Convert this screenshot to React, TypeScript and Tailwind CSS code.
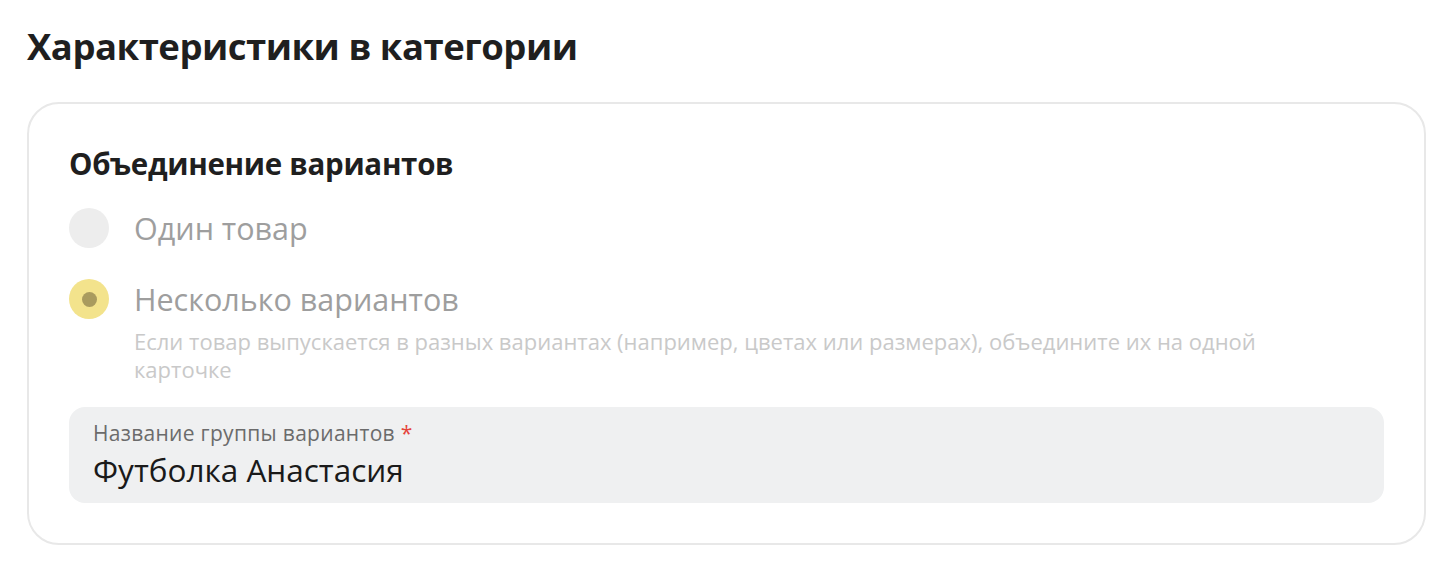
export default function App() {
  return (
    <div className="min-h-[562px] bg-white pl-[27px] pt-[21px] font-['Open_Sans',sans-serif] text-[#1f1f1f]">
      <h1 className="text-[36.5px] font-bold leading-[50px] tracking-[-0.5px]">Характеристики в категории</h1>
      <div className="mt-[31px] w-[1399px] rounded-[32px] border-2 border-[#e8e8e8] px-[40px] pb-[40px] pt-[41px]">
        <h2 className="text-[29.5px] font-bold leading-[38px] tracking-[-0.3px]">Объединение вариантов</h2>
        <div className="mt-[25px] flex items-center gap-[25px]">
          <span className="h-[40px] w-[40px] rounded-full bg-[#ededed]" />
          <span className="text-[30.5px] leading-[40px] text-[#9e9e9e]">Один товар</span>
        </div>
        <div className="mt-[31px] flex items-center gap-[25px]">
          <span className="flex h-[40px] w-[40px] items-center justify-center rounded-full bg-[#f3e38c]">
            <span className="h-[15px] w-[15px] rounded-full bg-[#a99b5e]" />
          </span>
          <span className="text-[30.5px] leading-[40px] text-[#9e9e9e]">Несколько вариантов</span>
        </div>
        <p className="ml-[65px] mt-[8px] max-w-[1180px] text-[22px] leading-[28px] text-[#c9c9c9]">
          Если товар выпускается в разных вариантах (например, цветах или размерах), объедините их на одной карточке
        </p>
        <div className="mt-[24px] rounded-[16px] bg-[#eff0f1] px-[24px] pb-[12px] pt-[12px]">
          <div className="text-[21px] leading-[28px] tracking-[0.3px] text-[#6b6b6b]">
            Название группы вариантов <span className="text-[#e5433b]">*</span>
          </div>
          <div className="mt-[2px] text-[31.5px] leading-[42px] text-[#1a1a1a]">Футболка Анастасия</div>
        </div>
      </div>
    </div>
  );
}
